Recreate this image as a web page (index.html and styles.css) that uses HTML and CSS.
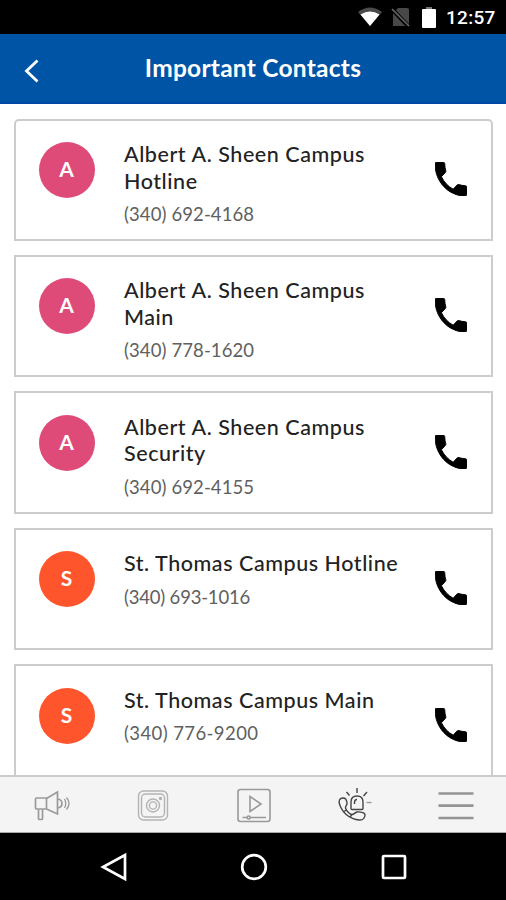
FILE: index.html
```html
<!DOCTYPE html>
<html lang="en">
<head>
<meta charset="utf-8">
<title>Important Contacts</title>
<link rel="stylesheet" href="styles.css">
</head>
<body>
<svg width="0" height="0" class="defs">
  <symbol id="phone" viewBox="3 3 18 18" preserveAspectRatio="none"><path stroke-width=".5" stroke-linejoin="round" d="M6.62 10.79c1.44 2.83 3.76 5.14 6.59 6.59l2.2-2.2c.27-.27.67-.36 1.02-.24 1.12.37 2.33.57 3.57.57.55 0 1 .45 1 1V20c0 .55-.45 1-1 1-9.39 0-17-7.61-17-17 0-.55.45-1 1-1h3.5c.55 0 1 .45 1 1 0 1.25.2 2.45.57 3.57.11.35.03.74-.25 1.02l-2.2 2.2z"/></symbol>
</svg>
<div class="screen">
  <div class="status">
    <svg class="wifi" viewBox="0 0 24 20"><path d="M12 19 0 5Q12-4 24 5Z" fill="#4b4b4b"/><path d="M12 19 2.5 7.5Q12 1.5 21.500 7.500Z" fill="#fff"/></svg>
    <svg class="sim" viewBox="0 0 20 20"><path d="M7 1h9q2 0 2 2v16H2V6z" fill="#484848"/><path d="M0 1 18 20" stroke="#000" stroke-width="4"/><path d="M1 2 18 19" stroke="#666" stroke-width="1.700"/></svg>
    <svg class="battery" viewBox="0 0 14 21"><path d="M4 0h6v3H4z" fill="#777"/><rect y="2" width="14" height="19" rx="1" fill="#fff"/></svg>
    <span class="clock">12:57</span>
  </div>
  <header class="header">
    <svg class="back" viewBox="0 0 16 24"><path d="M13.500 1.500 2.500 12l11 10.500"/></svg>
    <h1>Important Contacts</h1>
  </header>
  <main class="list">
    <article class="card rounded"><div class="avatar pink">A</div><div class="info"><h2>Albert A. Sheen Campus<br>Hotline</h2><p>(340) 692-4168</p></div><svg class="call"><use href="#phone"/></svg></article>
    <article class="card"><div class="avatar pink">A</div><div class="info"><h2>Albert A. Sheen Campus<br>Main</h2><p>(340) 778-1620</p></div><svg class="call"><use href="#phone"/></svg></article>
    <article class="card"><div class="avatar pink">A</div><div class="info"><h2>Albert A. Sheen Campus<br>Security</h2><p>(340) 692-4155</p></div><svg class="call"><use href="#phone"/></svg></article>
    <article class="card"><div class="avatar orange">S</div><div class="info"><h2>St. Thomas Campus Hotline</h2><p class="tight">(340) 693-1016</p></div><svg class="call"><use href="#phone"/></svg></article>
    <article class="card"><div class="avatar orange">S</div><div class="info"><h2>St. Thomas Campus Main</h2><p class="wide">(340) 776-9200</p></div><svg class="call"><use href="#phone"/></svg></article>
  </main>
  <nav class="tabs">
    <svg viewBox="0 0 40 40" stroke="#9a9a9a" stroke-width="1.700"><rect x="3.500" y="13" width="11" height="11" rx="1"/><path d="M14.500 13.500 25.500 7v22L14.500 24M6.500 24.500V33.500q0 1 1 1h2q1 0 1-1v-9.500M26 14q4 1 4 4.500t-4 4.500"/><path d="M32.500 14q2.500 4.500 0 9M34.500 12.500q5 6 0 12" stroke-width="1.300"/></svg>
    <svg viewBox="0 0 40 40" stroke="#b4b4b4" stroke-width="1.400"><rect x="5.500" y="6" width="29" height="29" rx="5"/><rect x="8.500" y="9" width="23" height="23" rx="4"/><circle cx="20" cy="20.500" r="6.500"/><circle cx="20" cy="20.500" r="3.600"/><circle cx="27.500" cy="13.500" r="1" fill="#999"/></svg>
    <svg viewBox="0 0 40 40" stroke="#999" stroke-width="1.600"><rect x="4" y="4.500" width="32" height="32" rx="2.500"/><path d="M16 11.500v15L27 19zM8.500 32.500H13M16.500 32.500H32"/><circle cx="14.700" cy="32.500" r="1.500"/></svg>
    <svg viewBox="0 0 40 40" stroke="#444" stroke-width="1.400"><path d="M16 23.500V17q0-6 6-6t6 6v6.500q0 1-1 1H17q-1 0-1-1zM19.500 19v-1.500q0-3 2.500-3"/><path d="M4.500 19c-1-3 0-5.500 3-6s4 1.500 4.500 4.500-2 3.500-1.500 5.500 3.500 6 6 6.500 3-2 5.500-2.500 8 .5 8 3-2 5.500-5.500 5C14 34.500 7 27 4.500 19zM12 24.500l-3 2M17.500 29l-2.500 3"/><path d="M22 3v5M11.500 7l3 3.500M32 7l-3.500 4" /><path d="M31.500 17.500h5" stroke="#999"/></svg>
    <svg viewBox="0 0 40 40" stroke="#949494" stroke-width="2.700"><path d="M2.500 8.500h35M2.500 20.700h35M2.500 33h35"/></svg>
  </nav>
  <footer class="system">
    <svg viewBox="0 0 30 30"><path d="M26 3v24L4 15z"/></svg>
    <svg viewBox="0 0 30 30"><circle cx="15" cy="15" r="11.800"/></svg>
    <svg viewBox="0 0 30 30"><rect x="4" y="4" width="22" height="22" rx="1"/></svg>
  </footer>
</div>
</body>
</html>
```
FILE: styles.css
```css
* { box-sizing: border-box; }
body { margin: 0; font-family: Lato, "Liberation Sans", sans-serif; }
.defs { display: none; }
.screen { width: 506px; height: 900px; display: flex; flex-direction: column; background: #fff; overflow: hidden; }
.status { height: 34px; flex: none; background: #000; display: flex; align-items: center; justify-content: flex-end; padding-right: 10px; color: #fff; }
.wifi { width: 24px; height: 20px; margin-right: 9px; }
.sim { width: 20px; height: 20px; margin-right: 11px; }
.battery { width: 14px; height: 21px; margin-right: 10px; }
.clock { width: 50px; font: 500 19px/34px Roboto, sans-serif; letter-spacing: 0.3px; white-space: nowrap; padding-top: 2px; }
.header { height: 70px; flex: none; display: grid; grid-template-columns: 64px 1fr 64px; align-items: center; background: #0054a6; border-bottom: 2px solid #0048a4; color: #fff; }
.back { width: 16px; height: 24px; margin: 5px 0 0 24px; fill: none; stroke: #fff; stroke-width: 2.8; }
h1 { margin: 0; font-size: 24.5px; line-height: 32px; font-weight: 700; text-align: center; letter-spacing: 0.25px; }
.list { flex: 1; min-height: 0; overflow: hidden; padding: 14.5px 13px 0 14px; }
.card { height: 122.4px; margin-bottom: 14px; border: 2px solid #ccc; display: flex; align-items: flex-start; padding: 21.5px 24.500px 0 22.500px; }
.rounded { border-radius: 5px 5px 0 0; }
.avatar { width: 56px; height: 56px; flex: none; border-radius: 50%; color: #fff; font: 700 21px/54px Lato, sans-serif; text-align: center; }
.pink { background: #df4b78; }
.orange { background: #ff552d; }
.info { flex: 1; padding-left: 29.5px; margin-top: -1px; white-space: nowrap; }
h2 { margin: 0; font-size: 21.5px; line-height: 26.5px; font-weight: 500; color: #222; letter-spacing: 0.55px; }
p { margin: 7px 0 0; font-size: 18.5px; line-height: 26px; font-weight: 400; color: #606060; letter-spacing: 0.1px; }
.tight { letter-spacing: -0.2px; }
.wide { letter-spacing: 0.4px; }
.call { width: 32px; height: 34px; flex: none; margin-top: 20px; fill: #000; stroke: #000; }
.tabs { height: 58px; flex: none; display: grid; grid-template-columns: repeat(5, 1fr); align-items: center; justify-items: center; padding-left: 2px; background: #f4f4f4; border-top: 2px solid #ccc; border-bottom: 1px solid #aaa; }
.tabs svg { width: 40px; height: 40px; fill: none; }
.system { height: 67px; flex: none; display: flex; justify-content: space-between; align-items: center; padding: 0 97px 0 99px; background: #000; }
.system svg { width: 30px; height: 30px; fill: none; stroke: #fff; stroke-width: 2.7; }
```
